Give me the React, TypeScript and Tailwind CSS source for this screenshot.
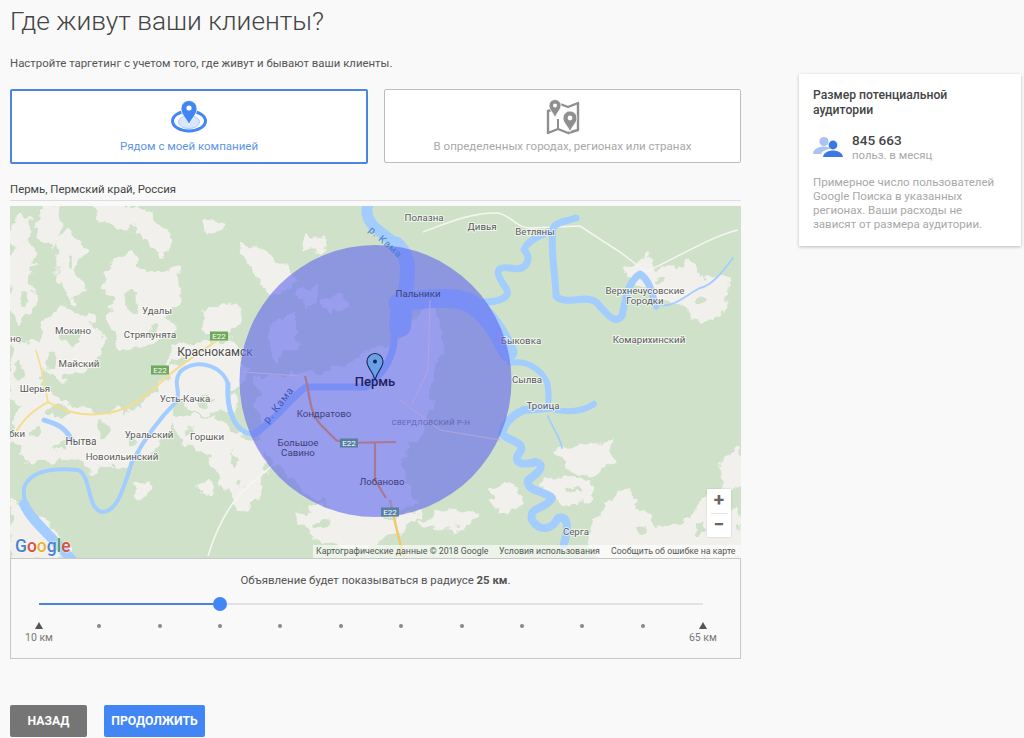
import React from 'react';

// white "built-up" patches on the map, page coordinates
const patches = [
  'M12 222 L24 214 L32 222 L26 240 L34 262 L26 282 L36 300 L22 322 L12 310 Z',
  'M42 212 L56 208 L62 226 L52 246 L38 238 Z',
  'M58 236 L72 232 L84 250 L76 268 L84 288 L70 300 L58 278 Z',
  'M94 206 L128 206 L136 222 L122 230 L112 218 L98 220 Z',
  'M132 212 L144 208 L172 240 L166 256 L150 246 L136 230 Z',
  'M106 270 L128 250 L138 262 L148 276 L176 268 L180 298 L166 316 L176 330 L146 344 L120 346 L110 320 L118 296 L106 290 Z',
  'M44 320 L66 306 L92 322 L104 348 L84 372 L60 378 L34 360 Z',
  'M12 340 L34 346 L44 380 L28 402 L12 400 Z',
  'M206 220 L220 222 L218 232 L208 230 Z',
  'M240 244 L260 250 L284 264 L292 280 L280 296 L268 292 L254 270 Z',
  'M204 312 L236 304 L240 320 L224 336 L206 330 Z',
  'M306 238 L324 240 L322 250 L308 250 Z',
  'M170 346 L232 342 L246 372 L232 392 L236 410 L196 412 L168 390 Z',
  'M40 392 L96 416 L140 410 L166 380 L176 420 L150 450 L120 466 L90 468 L60 456 L30 462 L14 440 L20 410 Z',
  'M170 420 L214 416 L238 436 L262 442 L266 470 L256 498 L238 508 L222 480 L212 456 L186 444 Z',
  'M136 486 L150 480 L146 496 L138 498 Z',
  'M200 486 L212 484 L210 494 L202 494 Z',
  // under the circle
  'M255 380 L330 372 L400 340 L430 300 L442 340 L425 420 L400 460 L415 505 L370 516 L310 495 L265 450 Z',
  'M268 330 L292 314 L298 345 L274 358 Z',
  'M300 292 L316 288 L318 302 L304 306 Z',
  'M326 300 L342 294 L348 306 L332 312 Z',
  'M330 506 L396 518 L420 514 L400 532 L360 548 L320 540 L296 516 Z',
  'M420 522 L448 510 L476 512 L470 524 L444 530 Z',
  'M490 490 L516 486 L522 504 L498 512 Z',
  'M540 484 L560 478 L590 482 L592 498 L566 504 Z',
  'M557 450 L584 448 L610 442 L612 462 L590 476 L566 468 Z',
  'M607 506 L626 490 L642 512 L654 530 L690 520 L706 500 L726 520 L740 510 L740 558 L600 558 L590 540 Z',
  'M722 462 L740 448 L740 486 L724 492 Z',
  'M622 268 L650 258 L654 274 L692 262 L700 284 L708 276 L728 282 L722 312 L702 322 L686 306 L660 300 L640 282 Z',
  'M12 500 L36 514 L60 540 L74 558 L12 558 Z',
];

// green spots inside the patches: [x, y, rx, ry]
const spots: [number, number, number, number][] = [
  [24, 296, 4, 9], [70, 262, 3, 7], [132, 300, 8, 11], [152, 330, 6, 4], [72, 340, 9, 5], [50, 360, 5, 8],
  [20, 372, 5, 10], [60, 410, 12, 5], [104, 430, 7, 8], [126, 408, 5, 5], [36, 432, 5, 5], [60, 448, 8, 3],
  [206, 400, 8, 5], [190, 432, 6, 4], [236, 460, 4, 7], [238, 484, 3, 4], [180, 362, 7, 4], [134, 442, 4, 5],
  [660, 282, 3, 4], [700, 300, 5, 3], [320, 526, 7, 3], [640, 530, 5, 4], [700, 528, 6, 5], [572, 490, 5, 3],
];

// river centre lines: [path, width]
const rivers: [string, number][] = [
  ['M368 204 C362 224 382 232 396 244', 11],
  ['M396 244 C412 258 408 276 404 300', 15],
  ['M402 302 L400 326', 22],
  ['M398 303 C424 298 450 296 468 302 C486 312 498 330 508 352', 19],
  ['M394 330 C396 350 388 370 366 387 L306 387 C292 396 276 420 254 434', 7],
  ['M254 434 C236 434 226 412 228 384', 5],
  ['M228 384 C222 364 194 358 180 372 C172 384 182 392 176 402 C160 418 146 436 132 462 C124 486 118 512 102 512 C86 508 92 476 78 470 C56 468 30 470 24 488 C22 510 36 522 48 534 L74 560', 4],
  ['M24 504 C32 522 50 534 72 560', 10],
  ['M483 302 C498 302 512 298 506 288 C494 272 496 266 510 268 C528 272 532 258 524 250 C528 240 540 236 548 232', 7],
  ['M576 218 C564 222 556 222 553 228 C550 250 556 280 556 296 C564 306 586 294 596 302 C606 312 614 326 622 316 C626 296 628 282 640 274 C652 282 652 298 656 306', 7],
  ['M656 304 C672 310 684 296 700 288 C712 286 724 270 733 258', 1.8],
  ['M510 363 C526 360 540 368 547 382 C550 396 548 404 548 408 C560 412 580 414 594 404', 6],
  ['M548 408 L524 410 C510 416 504 424 502 434 C510 442 526 442 520 452 C512 462 520 466 536 462 C548 466 534 476 528 480 C526 492 544 490 552 498 C546 510 528 506 532 520 C540 532 552 530 558 518 C566 516 570 522 564 544', 8],
  ['M548 416 C552 428 560 436 562 448', 1.8],
  ['M44 420 C56 424 64 426 72 440', 5],
];

const labels: { t: string; x: number; y: number; size?: number; anchor?: 'middle' | 'end' }[] = [
  { t: 'Полазна', x: 424, y: 221 },
  { t: 'Дивья', x: 482, y: 230 },
  { t: 'Ветляны', x: 535, y: 235 },
  { t: 'Удалы', x: 157, y: 314 },
  { t: 'Мокино', x: 73, y: 334 },
  { t: 'Стряпунята', x: 150, y: 338 },
  { t: 'Майский', x: 79, y: 367 },
  { t: 'Шерья', x: 35, y: 392 },
  { t: 'Усть-Качка', x: 185, y: 402 },
  { t: 'но', x: 21, y: 342, anchor: 'end' },
  { t: 'бки', x: 25, y: 437, anchor: 'end' },
  { t: 'Нытва', x: 81, y: 445, size: 10 },
  { t: 'Уральский', x: 149, y: 438 },
  { t: 'Горшки', x: 207, y: 440 },
  { t: 'Новоильинский', x: 122, y: 460 },
  { t: 'Быковка', x: 521, y: 344 },
  { t: 'Сылва', x: 527, y: 383 },
  { t: 'Троица', x: 543, y: 409 },
  { t: 'Серга', x: 576, y: 535 },
  { t: 'Верхнечусовские', x: 645, y: 294 },
  { t: 'Городки', x: 645, y: 304 },
  { t: 'Комарихинский', x: 649, y: 343 },
];

const circleLabels: { t: string; x: number; y: number }[] = [
  { t: 'Пальники', x: 418, y: 297 },
  { t: 'Кондратово', x: 324, y: 417 },
  { t: 'Большое', x: 298, y: 446 },
  { t: 'Савино', x: 298, y: 456 },
  { t: 'Лобаново', x: 382, y: 485 },
];

function Badge({ x, y, fill }: { x: number; y: number; fill: string }) {
  return (
    <g>
      <rect x={x - 9} y={y - 4.5} width={18} height={9} fill={fill} />
      <text x={x} y={y + 3} textAnchor="middle" fontSize={8} fill="#ffffff" fontFamily="Roboto, sans-serif">E22</text>
    </g>
  );
}

function MapDrawing() {
  return (
    <svg viewBox="10 206 731 352" className="block w-[731px] h-[352px]">
      <defs>
        <filter id="soft" x="0" y="0" width="1" height="1">
          <feGaussianBlur stdDeviation="0.6" />
        </filter>
        <filter id="rough" x="-2%" y="-2%" width="104%" height="104%">
          <feTurbulence type="fractalNoise" baseFrequency="0.07" numOctaves="3" seed="4" />
          <feDisplacementMap in="SourceGraphic" scale="18" xChannelSelector="R" yChannelSelector="G" />
          <feGaussianBlur stdDeviation="0.7" />
        </filter>
      </defs>
      <rect x={10} y={206} width={731} height={352} fill="#cfe2c9" />
      <g filter="url(#rough)">
        {patches.map((d, i) => (
          <path key={i} d={d} fill="#f1f0ec" stroke="#f1f0ec" strokeWidth={3} strokeLinejoin="round" />
        ))}
        {spots.map(([x, y, rx, ry], i) => (
          <ellipse key={i} cx={x} cy={y} rx={rx} ry={ry} fill="#cfe2c9" />
        ))}
      </g>
      <g filter="url(#soft)">
        {/* small roads */}
        <path d="M423 232 C440 226 470 212 497 213 C510 214 516 228 530 228 L580 226 L620 252 L646 272 C680 256 712 236 738 230" fill="none" stroke="#f6f6f2" strokeWidth={1.5} />
        <path d="M208 556 C216 530 226 510 240 494 C254 480 266 470 290 452" fill="none" stroke="#f6f6f2" strokeWidth={1.5} />
        {/* yellow road */}
        <path d="M218 340 C200 352 184 362 168 376 C150 392 132 412 100 414 C76 416 62 410 48 402 C34 410 24 418 16 432" fill="none" stroke="#f5dc8e" strokeWidth={2} />
        <path d="M36 350 C42 370 46 390 48 402" fill="none" stroke="#f5dc8e" strokeWidth={1.5} />
        <path d="M390 500 L398 535 L404 558" fill="none" stroke="#f2c868" strokeWidth={2.5} />
        {rivers.map(([d, w], i) => (
          <path key={i} d={d} fill="none" stroke="#a3ccff" strokeWidth={w} strokeLinecap="round" strokeLinejoin="round" />
        ))}
      </g>

      {labels.map((l) => (
        <text
          key={l.t}
          x={l.x}
          y={l.y}
          textAnchor={l.anchor ?? 'middle'}
          fontSize={l.size ?? 9.7}
          fill="#5a5a5a"
          stroke="#ffffff"
          strokeOpacity={0.65}
          strokeWidth={2}
          paintOrder="stroke"
          fontFamily="Roboto, sans-serif"
        >
          {l.t}
        </text>
      ))}
      <text x={215} y={356} textAnchor="middle" fontSize={12} fill="#4c4c4c" stroke="#ffffff" strokeOpacity={0.6} strokeWidth={2} paintOrder="stroke" fontFamily="Roboto, sans-serif">Краснокамск</text>
      <Badge x={219} y={336} fill="#6ea85a" />
      <Badge x={160} y={370} fill="#6ea85a" />

      {/* radius */}
      <circle cx={375.5} cy={381} r={136} fill="#5f66ee" fillOpacity={0.6} />

      {/* roads seen through the circle */}
      <g filter="url(#soft)">
        <path d="M305 376 C310 392 308 412 322 426 L336 440 L345 443 L396 442 M375 443 L375 480 L386 498" fill="none" stroke="#a9788e" strokeWidth={2.2} />
        <path d="M244 372 L300 376 M430 300 L428 370 L412 404 M400 400 L440 430 L500 440" fill="none" stroke="#b5a3dc" strokeWidth={1} />
      </g>
      <Badge x={349} y={443} fill="#587fa0" />
      <Badge x={390} y={512} fill="#587fa0" />

      {circleLabels.map((l) => (
        <text key={l.t} x={l.x} y={l.y} textAnchor="middle" fontSize={9.7} fill="#3f3f7a" fontFamily="Roboto, sans-serif">{l.t}</text>
      ))}
      <text x={431} y={425} textAnchor="middle" fontSize={7.5} letterSpacing={0.3} fill="#6263b6" fontFamily="Roboto, sans-serif">СВЕРДЛОВСКИЙ Р-Н</text>
      <text x={375} y={386} textAnchor="middle" fontSize={13} fontWeight={500} fill="#1d1f5c" fontFamily="Roboto, sans-serif">Пермь</text>
      <text transform="translate(268 424) rotate(-52)" fontSize={10.5} letterSpacing={0.8} fill="#3d55c0" fontFamily="Roboto, sans-serif">р. Кама</text>
      <text transform="translate(368 231) rotate(42)" fontSize={10} letterSpacing={0.8} fill="#4a7fd0" fontFamily="Roboto, sans-serif">р. Кама</text>

      {/* pin */}
      <path d="M375 380 C373 371 367 368 367 361.5 A8 8 0 0 1 383 361.5 C383 368 377 371 375 380 Z" fill="#6aa0ea" stroke="#14284e" strokeWidth={1.1} />
      <circle cx={375} cy={361.5} r={2} fill="#14284e" />

      {/* google logo */}
      <text x={15} y={552} fontSize={17.5} fontWeight={500} fontFamily="Roboto, 'Liberation Sans', sans-serif" stroke="#ffffff" strokeOpacity={0.5} strokeWidth={1.5} paintOrder="stroke">
        <tspan fill="#4a80d8">G</tspan>
        <tspan fill="#d9503f">o</tspan>
        <tspan fill="#e8b32e">o</tspan>
        <tspan fill="#4a80d8">g</tspan>
        <tspan fill="#4fa35a">l</tspan>
        <tspan fill="#d9503f">e</tspan>
      </text>
    </svg>
  );
}

function NearbyIcon() {
  return (
    <svg width="38" height="34" viewBox="0 0 38 34">
      <ellipse cx="19" cy="22" rx="16.5" ry="10" fill="none" stroke="#4285f4" strokeWidth="3" />
      <ellipse cx="19" cy="23" rx="10.5" ry="6.5" fill="#d9e6fb" stroke="#a9c6f7" strokeWidth="1" />
      <path d="M19 26 C17 20 11 16 11 9.5 A8 8 0 0 1 27 9.5 C27 16 21 20 19 26 Z" fill="#4285f4" stroke="#ffffff" strokeWidth="0.8" />
      <circle cx="19" cy="9" r="2.6" fill="#ffffff" />
    </svg>
  );
}

function RegionsIcon() {
  return (
    <svg width="34" height="36" viewBox="0 0 34 36">
      <path d="M8 10 L2 12 L2 34 L12 30 L22 34 L32 31 L32 4 L22 8 L14 5" fill="none" stroke="#8f8f8f" strokeWidth="2.4" strokeLinejoin="round" />
      <path d="M12 20 V30 M22 12 V20" fill="none" stroke="#8f8f8f" strokeWidth="2" />
      <path d="M9 19 C7 13 3 11 3 6.5 A6 6 0 0 1 15 6.5 C15 11 11 13 9 19 Z" fill="#8f8f8f" stroke="#ffffff" strokeWidth="0.8" />
      <circle cx="9" cy="6.5" r="2" fill="#ffffff" />
      <path d="M24 33 C22 27 17 24 17 19 A7 7 0 0 1 31 19 C31 24 26 27 24 33 Z" fill="#8f8f8f" stroke="#ffffff" strokeWidth="0.8" />
      <circle cx="24" cy="19" r="2.4" fill="#ffffff" />
    </svg>
  );
}

function PeopleIcon() {
  return (
    <svg width="30" height="22" viewBox="0 0 30 22">
      <circle cx="11" cy="5.5" r="4.6" fill="#a9c4f2" />
      <path d="M0 17 C1 12 7 10.5 11 10.5 C14 10.5 17 11.5 18 12.5 C13 13.5 9 15 8 18 L1 18 Z" fill="#a9c4f2" />
      <circle cx="20" cy="9" r="4.4" fill="#3b78e7" />
      <path d="M10 21 C10.5 16.5 16 14.5 20 14.5 C24 14.5 29.5 16.5 30 21 Z" fill="#3b78e7" />
    </svg>
  );
}

const ticks = Array.from({ length: 10 });

export default function App() {
  return (
    <div className="h-[738px] w-[1024px] overflow-hidden bg-[#f9f9f9] text-[#555] font-['Roboto',sans-serif]">
      <div className="flex items-start">
        {/* left column */}
        <div className="ml-[10px] w-[731px]">
          <h1 className="mt-[4px] h-[35px] text-[26.3px] leading-[35px] font-light text-[#444]">Где живут ваши клиенты?</h1>
          <p className="mt-[17px] text-[11.4px] leading-[14px] text-[#555]">Настройте таргетинг с учетом того, где живут и бывают ваши клиенты.</p>

          <div className="mt-[19px] flex gap-[16px]">
            <div className="flex h-[75px] w-[358px] flex-col items-center rounded-[2px] border-2 border-[#4a86e0] bg-white pt-[8px]">
              <NearbyIcon />
              <span className="mt-[6px] text-[11.5px] leading-[14px] text-[#5c94e6]">Рядом с моей компанией</span>
            </div>
            <div className="flex h-[74px] w-[357px] flex-col items-center rounded-[2px] border border-[#bdbdbd] bg-white pt-[9px]">
              <RegionsIcon />
              <span className="mt-[4px] text-[11.5px] leading-[14px] text-[#a8a8a8]">В определенных городах, регионах или странах</span>
            </div>
          </div>

          <div className="mt-[17px] h-[20px] border-b border-[#dedede] text-[11.4px] leading-[16px] text-[#444]">Пермь, Пермский край, Россия</div>

          {/* map */}
          <div className="relative mt-[5px] h-[353px] border-b border-[#c8c8c8]">
            <MapDrawing />
            <div className="absolute left-[697px] top-[283px] flex h-[48px] w-[24px] flex-col items-center bg-white shadow-[0_0_2px_rgba(0,0,0,0.15)]">
              <span className="h-[24px] text-[19px] leading-[22px] font-bold text-[#666]">+</span>
              <span className="h-px w-[17px] bg-[#e4e4e4]" />
              <span className="text-[19px] leading-[22px] font-bold text-[#666]">−</span>
            </div>
            <div className="absolute bottom-0 right-0 flex h-[13px] w-[428px] items-center bg-white/60 pl-[3px] text-[8.8px] leading-[13px] text-[#555]">
              <span className="w-[183px]">Картографические данные © 2018 Google</span>
              <span className="w-[112px]">Условия использования</span>
              <span className="whitespace-nowrap">Сообщить об ошибке на карте</span>
            </div>
          </div>

          {/* radius slider */}
          <div className="h-[100px] border-x border-b border-[#c8c8c8] pl-[28px] pr-[37px]">
            <p className="pl-[9px] pt-[14px] text-center text-[11.4px] leading-[14px] text-[#555]">
              Объявление будет показываться в радиусе <b className="font-bold">25 км</b>.
            </p>
            <div className="relative mt-[16px] h-[2px] bg-[#e3e3e3]">
              <div className="h-[2px] w-[181px] bg-[#4a86e0]" />
              <div className="absolute left-[174px] top-[-6px] h-[14px] w-[14px] rounded-full bg-[#4285f4]" />
            </div>
            <div className="mt-[17px] flex items-start justify-between">
              <div className="relative h-[8px] w-0">
                <span className="absolute left-[-4px] top-[0px] h-0 w-0 border-x-[4px] border-b-[7px] border-x-transparent border-b-[#555]" />
                <span className="absolute left-[-14px] top-[10px] whitespace-nowrap text-[10.5px] leading-[12px] text-[#777]">10 км</span>
              </div>
              {ticks.map((_, i) => (
                <span key={i} className="relative mt-[2px] h-[4px] w-0">
                  <span className="absolute left-[-2px] h-[4px] w-[4px] rounded-full bg-[#888]" />
                </span>
              ))}
              <div className="relative h-[8px] w-0">
                <span className="absolute left-[-4px] top-[0px] h-0 w-0 border-x-[4px] border-b-[7px] border-x-transparent border-b-[#555]" />
                <span className="absolute left-[-14px] top-[10px] whitespace-nowrap text-[10.5px] leading-[12px] text-[#777]">65 км</span>
              </div>
            </div>
          </div>

          <div className="mt-[46px] flex gap-[17px]">
            <button className="h-[32px] w-[77px] rounded-[2px] bg-[#757575] text-[12.2px] font-bold text-white">НАЗАД</button>
            <button className="h-[32px] w-[101px] rounded-[2px] bg-[#4285f4] text-[12.2px] font-bold text-white">ПРОДОЛЖИТЬ</button>
          </div>
        </div>

        {/* audience card */}
        <div className="ml-[58px] mt-[74px] h-[172px] w-[222px] bg-white px-[14px] pt-[14px] shadow-[0_1px_3px_rgba(0,0,0,0.25)]">
          <h2 className="text-[12.2px] leading-[15px] font-medium text-[#444]">Размер потенциальной аудитории</h2>
          <div className="mt-[14px] flex items-center gap-[9px]">
            <PeopleIcon />
            <div>
              <div className="text-[13.6px] leading-[16px] font-medium text-[#444]">845 663</div>
              <div className="text-[11.4px] leading-[14px] text-[#a8a8a8]">польз. в месяц</div>
            </div>
          </div>
          <p className="mt-[13px] text-[11.5px] leading-[14px] text-[#a8a8a8]">Примерное число пользователей Google Поиска в указанных регионах. Ваши расходы не зависят от размера аудитории.</p>
        </div>
      </div>
    </div>
  );
}
